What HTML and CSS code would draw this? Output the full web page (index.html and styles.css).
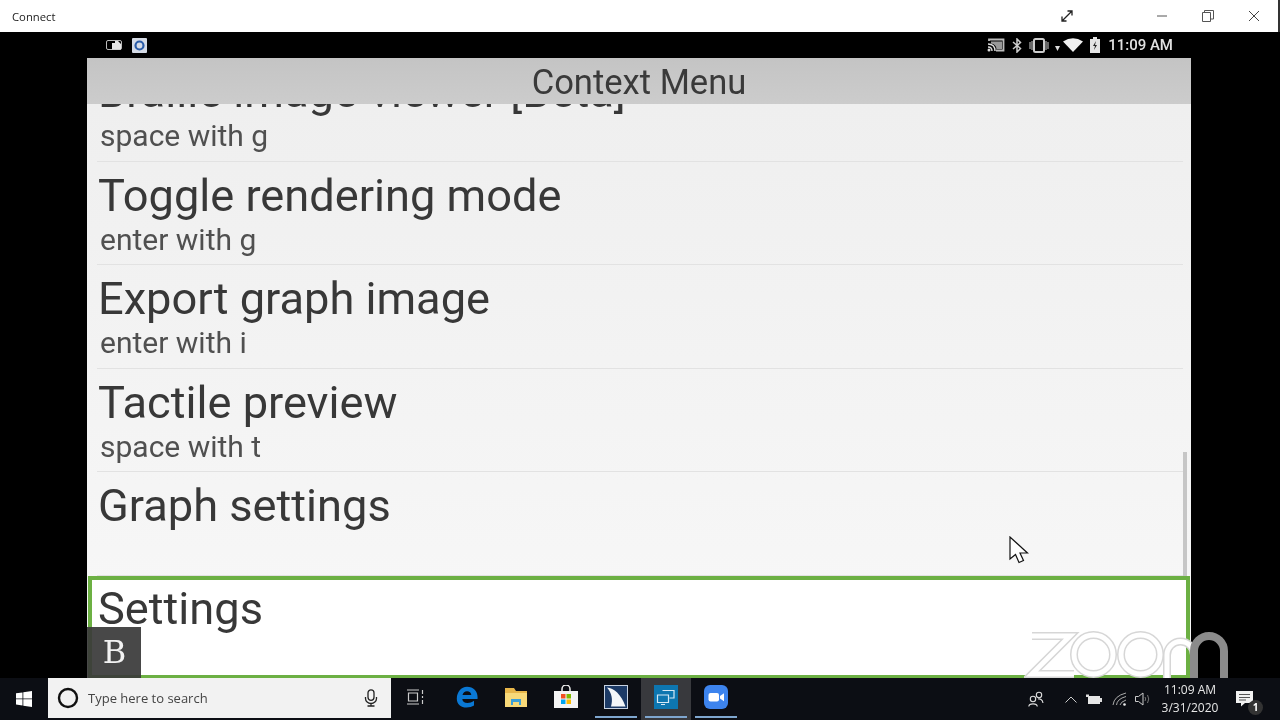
FILE: index.html
```html
<!DOCTYPE html>
<html lang="en">
<head>
<meta charset="utf-8">
<title>Connect</title>
<link rel="stylesheet" href="styles.css">
</head>
<body>
<div class="desktop">
  <header class="titlebar">
    <span class="app-name">Connect</span>
    <div class="window-controls">
      <svg class="expand" width="14" height="14" viewBox="0 0 14 14"><path d="M2.500 11.500 11.500 2.500M7.500 2H12V6.500M2 7.500V12H6.500" fill="none" stroke="#222" stroke-width="1.300"/></svg>
      <svg class="ctl minimize" width="12" height="12" viewBox="0 0 12 12"><path d="M1 6H11" stroke="#555"/></svg>
      <svg class="ctl restore" width="12" height="12" viewBox="0 0 12 12"><path d="M.5 2.500H8.500V11.500H.5ZM2.500 2.500V.5H11.500V9H8.500" fill="none" stroke="#555"/></svg>
      <svg class="ctl close" width="12" height="12" viewBox="0 0 12 12"><path d="M1 1 11 11M11 1 1 11" stroke="#444"/></svg>
    </div>
  </header>

  <main class="device">
    <div class="statusbar">
      <div class="status-left">
        <svg width="16" height="10" viewBox="0 0 16 10"><rect x=".5" y=".5" width="15" height="9" rx="1.500" fill="none" stroke="#bbb"/><path d="M6 9.500V3H9V1H12L15 4V9.500Z" fill="#e8e8e8"/></svg>
        <svg width="15" height="15" viewBox="0 0 15 15"><rect width="15" height="15" rx="1" fill="#d5dbe6"/><circle cx="7.500" cy="7.500" r="4" fill="none" stroke="#2a5ca8" stroke-width="2.200"/></svg>
      </div>
      <div class="status-right">
        <svg width="18" height="14" viewBox="0 0 18 14"><path d="M2 3V1.500H16.500V12.500H9" fill="none" stroke="#bbb" stroke-width="1.800"/><path d="M4 3.500H15V11H9.500Q9 6 4 5.500Z" fill="#999"/><path d="M1 6Q8 6 8 13M1 9Q5 9 5 13" fill="none" stroke="#ddd" stroke-width="1.400"/><circle cx="2" cy="12" r="1.500" fill="#ddd"/></svg>
        <svg class="bt" width="10" height="15" viewBox="0 0 10 15"><path d="M1 4 8.500 10.500 5 14V1L8.500 4.500 1 11" fill="none" stroke="#ccc" stroke-width="1.500"/></svg>
        <svg class="vibrate" width="20" height="15" viewBox="0 0 20 15"><rect x="5" y="1" width="10" height="13" rx="1.500" fill="none" stroke="#ccc" stroke-width="2"/><path d="M1 4V11M3 3V12M17 3V12M19 4V11" stroke="#888" stroke-width="1.500"/></svg>
        <svg class="signal" width="5" height="5" viewBox="0 0 5 5"><path d="M0 0H5L2.500 5Z" fill="#ddd"/></svg>
        <svg width="20" height="14" viewBox="0 0 20 14"><path d="M0 3.500Q10-3 20 3.500L10 14Z" fill="#f0f0f0"/></svg>
        <svg class="batt" width="10" height="16" viewBox="0 0 10 16"><path d="M3 0H7V2H10V16H0V2H3Z" fill="#e4e4e4"/><path d="M6 4 3 9H5L4 13 7 8H5Z" fill="#222"/></svg>
        <span class="clock">11:09 AM</span>
      </div>
    </div>

    <section class="screen">
      <h1 class="screen-title">Context Menu</h1>
      <ul class="menu">
        <li class="item first"><div class="item-title">Braille image viewer [Beta]</div><div class="item-sub">space with g</div></li>
        <li class="item"><div class="item-title">Toggle rendering mode</div><div class="item-sub">enter with g</div></li>
        <li class="item"><div class="item-title">Export graph image</div><div class="item-sub">enter with i</div></li>
        <li class="item"><div class="item-title">Tactile preview</div><div class="item-sub">space with t</div></li>
        <li class="item"><div class="item-title">Graph settings</div><div class="item-sub">&nbsp;</div></li>
        <li class="item selected"><div class="item-title">Settings</div></li>
      </ul>
      <div class="scrollbar"></div>
      <div class="badge">B</div>
    </section>
  </main>

  <footer class="taskbar">
    <div class="start">
      <svg width="16" height="16" viewBox="0 0 16 16"><path d="M0 2.300 6.500 1.400V7.500H0ZM7.300 1.300 16 0V7.500H7.300ZM0 8.300H6.500V14.500L0 13.600ZM7.300 8.300H16V16L7.300 14.700Z" fill="#fff"/></svg>
    </div>
    <div class="search">
      <svg width="22" height="22" viewBox="0 0 22 22"><circle cx="11" cy="11" r="9" fill="none" stroke="#111" stroke-width="2.400"/></svg>
      <span class="search-text">Type here to search</span>
      <svg class="mic" width="14" height="18" viewBox="0 0 14 18"><rect x="4" y=".8" width="6" height="10.500" rx="3" fill="none" stroke="#222" stroke-width="1.300"/><path d="M1.500 8V9.500A5.500 5 0 0 0 12.500 9.500V8M7 14.500V17M3.500 17H10.500" fill="none" stroke="#222" stroke-width="1.300"/></svg>
    </div>
    <div class="tb-item">
      <svg class="taskview" width="18" height="16" viewBox="0 0 18 16"><path d="M1 1H13M1 15H13M2.500 4H11.500V12H2.500ZM16.500 1V5M16.500 7V9M16.500 11V15" fill="none" stroke="#ccc" stroke-width="1.200"/></svg>
    </div>
    <div class="tb-item">
      <svg class="edge" width="22" height="22" viewBox="0 0 22 22"><path d="M11 .8C5 .8 1 6 .8 12.500C.7 18 5 21.500 10.500 21.500C13.500 21.500 16 20.800 18 19.500V14.800C16 16.200 13.500 17 11.500 17C8.500 17 6.500 15.500 6.300 13H21.500C22.300 6 18 .8 11 .8ZM6.500 9C7 6.800 8.800 5.300 11 5.300C13.500 5.300 15.200 6.800 15.300 9Z" fill="#0a78d4"/></svg>
    </div>
    <div class="tb-item">
      <svg width="22" height="19" viewBox="0 0 22 19"><path d="M0 0H9L11 3H22V18H0Z" fill="#e8b64a"/><path d="M0 5H22V19H0Z" fill="#f8d979"/><path d="M6 11H16V17H14V14H8V17H6Z" fill="#3b9fd8"/></svg>
    </div>
    <div class="tb-item">
      <svg width="24" height="24" viewBox="0 0 24 24"><path d="M8 6V4A4 4 0 0 1 16 4V6" fill="none" stroke="#eee" stroke-width="1.500"/><rect y="6" width="24" height="17" fill="#f4f4f4"/><rect x="7" y="9" width="4.500" height="4.500" fill="#f25022"/><rect x="12.500" y="9" width="4.500" height="4.500" fill="#7fba00"/><rect x="7" y="14.500" width="4.500" height="4.500" fill="#00a4ef"/><rect x="12.500" y="14.500" width="4.500" height="4.500" fill="#ffb900"/></svg>
    </div>
    <div class="tb-item running">
      <svg width="24" height="24" viewBox="0 0 24 24"><rect x=".5" y=".5" width="23" height="23" fill="#1c3a66" stroke="#c8d2e0"/><path d="M3 2.500C10 3 17 9 21.500 21.500H7C9 15 8 8 3 2.500Z" fill="#f4f6f8"/></svg>
    </div>
    <div class="tb-item running active">
      <svg width="24" height="24" viewBox="0 0 24 24"><rect width="24" height="24" fill="#0d76b0"/><path d="M8.500 5.500H20V13H15.500M3.500 10H14.500V17.500H3.500ZM7 19.500H11" fill="none" stroke="#d5e8f5" stroke-width="1.200"/></svg>
    </div>
    <div class="tb-item running">
      <svg width="24" height="24" viewBox="0 0 24 24"><rect width="24" height="24" rx="6" fill="#3d84ee"/><rect x="4.500" y="8" width="10.500" height="8.500" rx="2" fill="#fff"/><path d="M16 11 20 8.200V16.300L16 13.500Z" fill="#fff"/></svg>
    </div>

    <div class="tray">
      <svg class="tray-people" width="16" height="16" viewBox="0 0 16 16"><circle cx="5" cy="8" r="2.700" fill="none" stroke="#ddd" stroke-width="1.100"/><circle cx="11" cy="4" r="2.700" fill="none" stroke="#ddd" stroke-width="1.100"/><path d="M.8 15.500C1 12 9 12 9.300 15.500M10 8C12 7.500 14.500 8.500 15 12" fill="none" stroke="#ddd" stroke-width="1.100"/></svg>
      <svg class="tray-chevron" width="12" height="7" viewBox="0 0 12 7"><path d="M.5 6.500 6 1 11.500 6.500" fill="none" stroke="#ccc"/></svg>
      <svg class="tray-power" width="16" height="11" viewBox="0 0 16 11"><rect x="2" y="2" width="12" height="8" fill="#e6e6e6"/><path d="M14 4H16V8H14ZM0 .5V3H3V.5" fill="#ddd"/></svg>
      <svg class="tray-wifi" width="15" height="14" viewBox="0 0 15 14"><path d="M1 13Q2 4 14 1M4.500 13Q5 7 14 4.500M8 13Q8.500 10 14 8" fill="none" stroke="#aaa"/><circle cx="12.500" cy="12.500" r="1.300" fill="#eee"/></svg>
      <svg class="tray-volume" width="16" height="14" viewBox="0 0 16 14"><path d="M.5 4.500H3.500L8 1V13L3.500 9.500H.5Z" fill="none" stroke="#ccc"/><path d="M10 5Q11.500 7 10 9M12.500 3Q15 7 12.500 11" fill="none" stroke="#777"/></svg>
      <div class="datetime"><span>11:09 AM</span><span>3/31/2020</span></div>
      <div class="notif">
        <svg width="18" height="16" viewBox="0 0 18 16"><path d="M0 0H17V12H9L5 15.500V12H0Z" fill="#f2f2f2"/><path d="M3 3.500H14M3 6.500H14M3 9H10" stroke="#555"/></svg>
        <span class="notif-count">1</span>
      </div>
    </div>
  </footer>

  <svg class="watermark" width="204" height="49" viewBox="0 0 204 49">
    <g class="wm-edge"><path d="M8 7H46L8 45H50"/><circle cx="69.500" cy="25.500" r="19.500"/><circle cx="116.500" cy="25.500" r="19.500"/><path d="M143 49V26A13.500 13.500 0 0 1 170 26V49"/></g>
    <g class="wm-core"><path d="M8 7H46L8 45H50"/><circle cx="69.500" cy="25.500" r="19.500"/><circle cx="116.500" cy="25.500" r="19.500"/><path d="M143 49V26A13.500 13.500 0 0 1 170 26V49"/></g>
    <path class="wm-leg" d="M170 49V22A15 15 0 0 1 200 22V49"/>
  </svg>

  <svg class="cursor" width="20" height="28" viewBox="0 0 20 28"><path d="M1 1V23L6.500 18.500 10 26.500 14.500 24.500 11 17H18.500Z" fill="#fff" stroke="#111" stroke-width="1.200"/></svg>
</div>
</body>
</html>
```
FILE: styles.css
```css
* { box-sizing: border-box; }
html, body { margin: 0; padding: 0; }
body { background: #000; overflow: hidden; }
.desktop {
  position: relative;
  width: 1280px;
  height: 720px;
  display: flex;
  flex-direction: column;
  background: #000;
  font-family: "Open Sans", "Liberation Sans", sans-serif;
  filter: blur(.4px);
}

/* title bar */
.titlebar {
  height: 32px;
  flex: none;
  display: flex;
  align-items: center;
  justify-content: space-between;
  background: #fff;
  border-right: 2px solid #333;
  padding-left: 12px;
}
.app-name { font-size: 11.300px; color: #222; }
.window-controls { display: flex; align-items: center; }
.expand { margin-right: 82px; }
.ctl { margin-right: 34px; }
.close { margin-right: 18px; }

/* device */
.device { flex: 1; min-height: 0; display: flex; flex-direction: column; }
.statusbar {
  height: 26px;
  flex: none;
  display: flex;
  align-items: center;
  justify-content: space-between;
  padding: 0 107px 0 106px;
}
.status-left, .status-right { display: flex; align-items: center; }
.status-left { gap: 10px; }
.status-right { gap: 6px; }
.bt { margin-left: 1px; }
.vibrate { margin-left: 1px; }
.signal { margin-right: -3px; margin-top: 6px; }
.batt { margin-left: 1px; }
.clock {
  margin-left: 2px;
  font: 500 15px "Roboto", sans-serif;
  color: #e2e2e2;
}

.screen {
  position: relative;
  flex: 1;
  min-height: 0;
  width: 1104px;
  margin-left: 87px;
  display: flex;
  flex-direction: column;
  overflow: hidden;
  background: #f6f6f6;
}
.screen-title {
  height: 46px;
  flex: none;
  margin: 0;
  background: linear-gradient(#c4c4c4, #cccccc);
  color: #3a3a3a;
  font: 400 34.600px/49px "Roboto", sans-serif;
  text-align: center;
}
.menu {
  flex: 1;
  min-height: 0;
  margin: 0;
  padding: 0;
  list-style: none;
  overflow: hidden;
  background: linear-gradient(#efefef, #f8f8f8);
}
.item {
  height: 103.500px;
  margin-right: 8px;
  margin-left: 10px;
  padding: 8px 0 0 1px;
  border-bottom: 1px solid #e2e2e2;
  color: #383838;
}
.first { margin-top: -46px; }
.item-title { font: 400 45.200px/52px "Roboto", sans-serif; }
.item-sub { font: 400 30px/40px "Roboto", sans-serif; color: #505050; padding-left: 2px; margin-top: -2px; }
.selected {
  height: 103px;
  margin: 0 0 0 1px;
  padding: 3px 0 0 6px;
  background: #fff;
  border: 4px solid #6cb043;
  width: 1102px;
}
.scrollbar {
  position: absolute;
  top: 394px;
  right: 4px;
  width: 4px;
  height: 124px;
  background: #c6c6c6;
}
.badge {
  position: absolute;
  left: 0;
  bottom: 0;
  width: 54px;
  height: 51px;
  padding-left: 1px;
  background: rgba(58, 58, 58, .93);
  color: #f2f2f2;
  font: 400 32px/51px "DejaVu Serif", "Liberation Serif", serif;
  text-align: center;
}

/* taskbar */
.taskbar {
  height: 42px;
  flex: none;
  display: flex;
  align-items: stretch;
  background: #0c0e14;
}
.start { width: 48px; display: flex; align-items: center; justify-content: center; }
.search {
  width: 343px;
  height: 40px;
  display: flex;
  align-items: center;
  background: #f2f2f2;
  padding: 0 13px 0 9px;
}
.search-text { margin-left: 9px; flex: 1; font-size: 13px; color: #444; }
.tb-item {
  width: 50px;
  display: flex;
  align-items: center;
  justify-content: center;
  position: relative;
  padding-bottom: 4px;
}
.taskview { margin-right: 2px; }
.edge { margin-left: 2px; }
.running::after {
  content: "";
  position: absolute;
  left: 4px;
  right: 4px;
  bottom: 2px;
  height: 2px;
  background: #7ea6cf;
}
.active { background: #38393d; }
.tray {
  margin-left: auto;
  display: flex;
  align-items: center;
  color: #e6e6e6;
  padding-right: 26px;
}
.tray-people { margin-right: 21px; }
.tray-chevron { margin-right: 9px; }
.tray-power { margin-right: 10px; }
.tray-wifi { margin-right: 8px; }
.tray-volume { margin-right: 6px; }
.datetime {
  display: flex;
  flex-direction: column;
  align-items: center;
  width: 66px;
  font-size: 12px;
  line-height: 18.500px;
}
.notif { position: relative; margin-left: 13px; display: flex; }
.notif-count {
  position: absolute;
  right: -9px;
  bottom: -8px;
  width: 15px;
  height: 15px;
  border-radius: 50%;
  background: #333;
  color: #fff;
  font: 700 10px/15px "Open Sans", sans-serif;
  text-align: center;
}

/* overlays */
.watermark { position: absolute; left: 1024px; top: 629px; }
.watermark path, .watermark circle { fill: none; }
.wm-edge { stroke: #d6d6d6; stroke-width: 8px; }
.wm-core { stroke: #fff; stroke-width: 5px; }
.wm-leg { stroke: #8b8b8b; stroke-width: 8px; }
.cursor { position: absolute; left: 1009px; top: 536px; }
```
